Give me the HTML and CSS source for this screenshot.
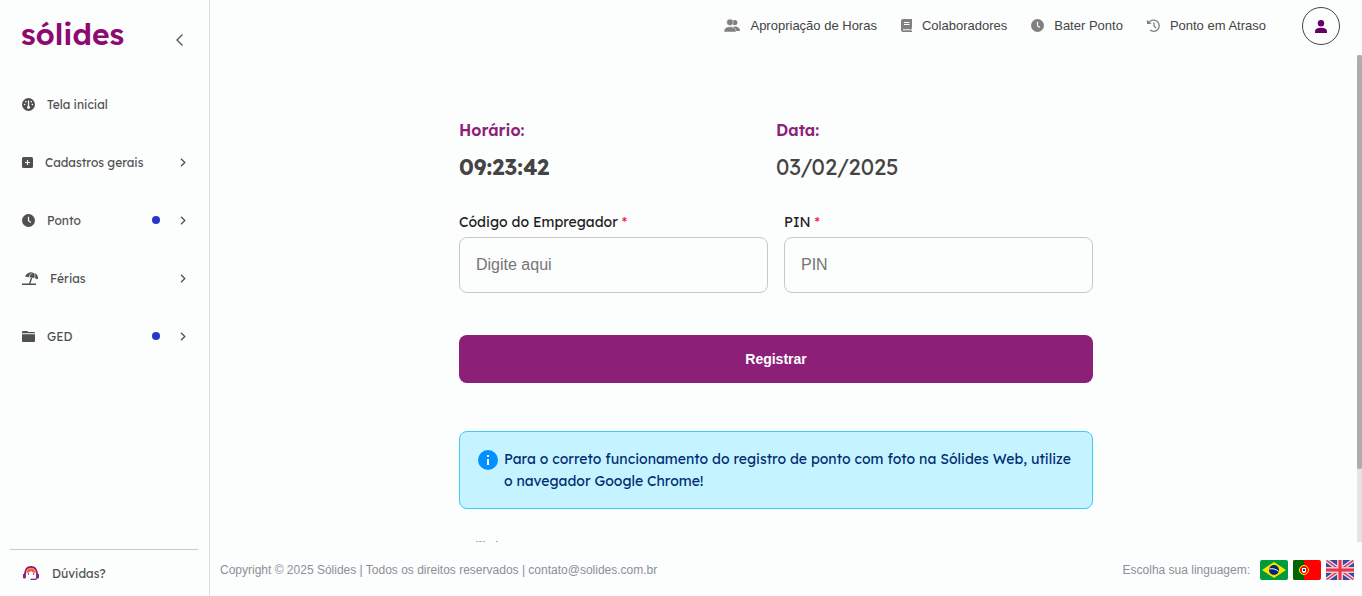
FILE: index.html
```html
<!DOCTYPE html>
<html lang="pt-BR">
<head>
    <meta charset="UTF-8">
    <meta name="viewport" content="width=device-width, initial-scale=1.0">
    <title>Registrar Ponto</title>
    <link rel="stylesheet" href="styles.css">
</head>
<body>
    <aside class="sidebar">
        <div class="brand">
            <a href="#" class="logo">sólides</a>
            <button type="button" class="collapse" aria-label="Recolher menu">
                <svg width="9" height="14" viewBox="0 0 9 14"><path d="M7.500 1.500 2 7l5.500 5.500" /></svg>
            </button>
        </div>

        <nav class="menu">
            <a href="#" class="menu-item">
                <svg class="icon" width="13" height="13" viewBox="0 0 13 13">
                    <circle cx="6.500" cy="6.500" r="6.500" />
                    <path class="cut-line" d="M6.500 2.500v6" />
                    <circle class="cut" cx="6.500" cy="9.200" r="1.500" />
                    <circle class="cut" cx="3.800" cy="3.700" r=".8" />
                    <circle class="cut" cx="9.200" cy="3.700" r=".8" />
                    <circle class="cut" cx="2.600" cy="6.500" r=".8" />
                    <circle class="cut" cx="10.400" cy="6.500" r=".8" />
                </svg>
                <span class="menu-text">Tela inicial</span>
            </a>
            <a href="#" class="menu-item">
                <svg class="icon" width="11" height="11" viewBox="0 0 11 11">
                    <rect width="11" height="11" rx="1.500" />
                    <path class="cut-line" d="M5.500 3v5M3 5.500h5" />
                </svg>
                <span class="menu-text">Cadastros gerais</span>
                <svg class="chevron" width="6" height="9" viewBox="0 0 6 9"><path d="M1 .8 4.800 4.500 1 8.200" /></svg>
            </a>
            <a href="#" class="menu-item">
                <svg class="icon" width="13" height="13" viewBox="0 0 13 13">
                    <circle cx="6.500" cy="6.500" r="6.500" />
                    <path class="cut-line" d="M6.500 2.800v3.900l2.400 1.700" />
                </svg>
                <span class="menu-text">Ponto</span>
                <span class="dot"></span>
                <svg class="chevron" width="6" height="9" viewBox="0 0 6 9"><path d="M1 .8 4.800 4.500 1 8.200" /></svg>
            </a>
            <a href="#" class="menu-item">
                <svg class="icon" width="16" height="13" viewBox="0 0 16 13">
                    <path d="M3 4.600C4.300 1.300 7.600-.3 11 .3L8 2.200 6.600 5.300zM7.400 5.200C8 2.700 9.800.8 11.600.7c1.200.9 1.300 3 .7 5.200zM13 6.200c.5-1.900.4-3.800-.4-5.200 2.500 1 3.900 3.500 3.300 6.300z" />
                    <path d="M9 5.600 10.300 6 8.400 11.500H14V13H0v-1.500h7z" />
                </svg>
                <span class="menu-text">Férias</span>
                <svg class="chevron" width="6" height="9" viewBox="0 0 6 9"><path d="M1 .8 4.800 4.500 1 8.200" /></svg>
            </a>
            <a href="#" class="menu-item">
                <svg class="icon" width="13" height="11" viewBox="0 0 13 11">
                    <path d="M0 2.300V1a1 1 0 0 1 1-1h4l1.500 1H12a1 1 0 0 1 1 1v.3zM0 3.300h13V10a1 1 0 0 1-1 1H1a1 1 0 0 1-1-1z" />
                </svg>
                <span class="menu-text">GED</span>
                <span class="dot"></span>
                <svg class="chevron" width="6" height="9" viewBox="0 0 6 9"><path d="M1 .8 4.800 4.500 1 8.200" /></svg>
            </a>
        </nav>

        <a href="#" class="help">
            <svg width="16" height="14" viewBox="0 0 16 14">
                <path d="M2 12C1 5 3.500 1 8 1s7 4 6 11" fill="none" stroke="#8d1f78" stroke-width="1.800" />
                <path d="M3.300 7C3.800 3.700 6 2.200 8 2.200s4.200 1.500 4.700 4.800C10.500 6.800 9 6 8 4.700 7 6 5.500 6.800 3.300 7z" fill="#ff5a1f" />
                <path d="M0 8h2.300v4.500H1a1 1 0 0 1-1-1zM13.700 8H16v3.500a1 1 0 0 1-1 1h-1.300z" fill="#8d1f78" />
                <path d="M5.500 7.300v1.500M10.500 7.300v1.500M14 12.300l-1.500 1H7.500" fill="none" stroke="#8d1f78" stroke-width="1.200" />
            </svg>
            <span>Dúvidas?</span>
        </a>
    </aside>

    <div class="page">
        <header class="topbar">
            <a href="#" class="top-link">
                <svg width="16" height="13" viewBox="0 0 16 13">
                    <circle cx="10.800" cy="3.500" r="2.600" />
                    <path d="M9.500 7.600c3.500-.6 6.500 1.100 6.500 4.400h-5z" />
                    <circle class="edge" cx="6" cy="3.300" r="3.300" />
                    <path class="edge" d="M0 13c0-3.600 2-5.200 6-5.200S12 9.400 12 13z" />
                </svg>
                Apropriação de Horas
            </a>
            <a href="#" class="top-link">
                <svg width="11" height="13" viewBox="0 0 11 13">
                    <path d="M2 0h9v9.500h-.7V12h.7v1H2a2 2 0 0 1-2-2V2a2 2 0 0 1 2-2z" />
                    <path class="page-line" d="M3 3.500h5.500M3 5.500h5.500M2 10.800h7.500" />
                </svg>
                Colaboradores
            </a>
            <a href="#" class="top-link">
                <svg width="13" height="13" viewBox="0 0 13 13">
                    <circle cx="6.500" cy="6.500" r="6.500" />
                    <path class="cut-line" d="M6.500 2.800v3.900l2.400 1.700" />
                </svg>
                Bater Ponto
            </a>
            <a href="#" class="top-link">
                <svg width="13" height="13" viewBox="0 0 13 13">
                    <path class="line" d="M1.800 3.800A5.600 5.600 0 1 1 3 11M7 3.500v3.300L9 9" />
                    <path d="M0 .8 4.500 5H0z" />
                </svg>
                Ponto em Atraso
            </a>
            <button type="button" class="avatar" aria-label="Perfil">
                <svg width="12" height="13" viewBox="0 0 12 13">
                    <circle cx="6" cy="3.200" r="3.200" />
                    <path d="M0 13v-1.500C0 9 2 7.800 6 7.800s6 1.200 6 3.700V13z" />
                </svg>
            </button>
        </header>

        <div class="scroll-area">
            <main class="content">
                <form class="register">
                    <div class="clock">
                        <div class="clock-col">
                            <h2>Horário:</h2>
                            <p class="time">09:23:42</p>
                        </div>
                        <div class="clock-col">
                            <h2>Data:</h2>
                            <p class="date">03/02/2025</p>
                        </div>
                    </div>

                    <div class="fields">
                        <div class="field">
                            <label for="codigo">Código do Empregador <span class="required">*</span></label>
                            <input type="text" id="codigo" placeholder="Digite aqui">
                        </div>
                        <div class="field">
                            <label for="pin">PIN <span class="required">*</span></label>
                            <input type="password" id="pin" placeholder="PIN">
                        </div>
                    </div>

                    <button type="submit" class="submit">Registrar</button>

                    <div class="notice">
                        <svg width="20" height="20" viewBox="0 0 20 20">
                            <circle cx="10" cy="10" r="10" />
                            <path d="M9 5h2v2H9zM9 9h2v6H9z" />
                        </svg>
                        <p>Para o correto funcionamento do registro de ponto com foto na Sólides Web, utilize o navegador Google Chrome!</p>
                    </div>

                    <svg class="marks" width="24" height="1" viewBox="0 0 24 1"><path d="M1 .5h2M4 .5h3M8 .5h2M21 .5h2" /></svg>
                </form>
            </main>
            <div class="scrollbar"><div class="thumb"></div></div>
        </div>

        <footer class="footer">
            <span>Copyright © 2025 Sólides | Todos os direitos reservados | contato@solides.com.br</span>
            <div class="languages">
                <span>Escolha sua linguagem:</span>
                <button type="button" class="flag" aria-label="Português (Brasil)">
                    <svg width="28" height="20" viewBox="0 0 28 20">
                        <rect width="28" height="20" fill="#009b3a" />
                        <path d="M14 2 26 10 14 18 2 10z" fill="#fedf00" />
                        <circle cx="14" cy="10" r="5" fill="#002776" />
                        <path d="M9.300 9c3.300-.8 6.600 0 9.200 2.400" fill="none" stroke="#fff" />
                    </svg>
                </button>
                <button type="button" class="flag" aria-label="Português (Portugal)">
                    <svg width="28" height="20" viewBox="0 0 28 20">
                        <rect width="28" height="20" fill="#f00" />
                        <rect width="11" height="20" fill="#060" />
                        <circle cx="11" cy="10" r="4.500" fill="#f00" stroke="#ff0" />
                        <path d="M8.500 7.500h5v3.500a2.500 2.500 0 0 1-5 0z" fill="#fff" stroke="#f00" />
                        <rect x="10" y="9" width="2" height="2" fill="#039" />
                    </svg>
                </button>
                <button type="button" class="flag" aria-label="English">
                    <svg width="28" height="20" viewBox="0 0 28 20">
                        <rect width="28" height="20" fill="#3a4a9f" />
                        <path d="M0 0 28 20M28 0 0 20" stroke="#e8e8f4" stroke-width="4" />
                        <path d="M0 0 28 20M28 0 0 20" stroke="#e8384f" stroke-width="1.500" />
                        <path d="M14 0v20M0 10h28" stroke="#e8c8d4" stroke-width="6" />
                        <path d="M14 0v20M0 10h28" stroke="#ee3344" stroke-width="3" />
                    </svg>
                </button>
            </div>
        </footer>
    </div>
</body>
</html>
```
FILE: styles.css
```css
* {
    box-sizing: border-box;
}
body {
    display: flex;
    height: 100vh;
    margin: 0;
    background-color: #fcfdfd;
    color: #444;
    font-family: "Liberation Sans", Arial, sans-serif;
    overflow: hidden;
}
a {
    color: inherit;
    text-decoration: none;
}
button {
    padding: 0;
    border: 0;
    background: none;
    cursor: pointer;
}
svg {
    flex: none;
    display: block;
}
h2, p {
    margin: 0;
}

/* Sidebar */
.sidebar {
    display: flex;
    flex-direction: column;
    flex: none;
    width: 210px;
    border-right: 1px solid #dcdfdf;
    font-family: Lexend, Lato, sans-serif;
    font-size: 12px;
    color: #505050;
}
.brand {
    display: flex;
    justify-content: space-between;
    align-items: center;
    height: 75px;
    padding: 0 25px 8px 21px;
}
.logo {
    color: #8f0a70;
    font-size: 30px;
    font-weight: 600;
    line-height: 40px;
}
.collapse {
    padding-top: 12px;
}
.collapse path, .chevron path {
    fill: none;
    stroke: #505050;
    stroke-width: 1.3;
}
.menu {
    flex: 1;
}
.menu-item {
    display: flex;
    align-items: center;
    height: 58px;
    padding: 0 23px 0 22px;
}
.icon {
    margin-right: 12px;
    fill: #505050;
}
.cut {
    fill: #fcfdfd;
}
.cut-line {
    fill: none;
    stroke: #fcfdfd;
    stroke-width: 1.2;
}
.menu-text {
    flex: 1;
}
.dot {
    width: 8px;
    height: 8px;
    margin-right: 20px;
    border-radius: 50%;
    background-color: #2536c8;
}
.help {
    display: flex;
    align-items: center;
    gap: 13px;
    height: 47px;
    margin: 0 11px 0 10px;
    padding-left: 13px;
    border-top: 1px solid #c8caca;
}

/* Page */
.page {
    display: flex;
    flex: 1;
    flex-direction: column;
    min-width: 0;
}
.topbar {
    display: flex;
    justify-content: flex-end;
    align-items: center;
    gap: 24px;
    height: 55px;
    padding: 0 22px 3px 0;
}
.top-link {
    display: flex;
    align-items: center;
    gap: 10px;
    padding-bottom: 2px;
    font-size: 13px;
}
.top-link svg {
    fill: #808080;
}
.edge {
    stroke: #fcfdfd;
    stroke-width: .5;
}
.page-line {
    stroke: #fcfdfd;
    stroke-width: 1;
}
.line {
    fill: none;
    stroke: #808080;
    stroke-width: 1.3;
}
.avatar {
    display: flex;
    align-items: center;
    justify-content: center;
    width: 38px;
    height: 38px;
    margin-left: 12px;
    border: 1px solid #444;
    border-radius: 50%;
}
.avatar svg {
    fill: #660066;
}
.scroll-area {
    display: flex;
    flex: 1;
    min-height: 0;
}
.content {
    flex: 1;
    padding: 64px 15px 0 0;
    overflow: hidden;
    font-family: Lexend, Inter, sans-serif;
}
.scrollbar {
    width: 5px;
    background-color: #e4e4e4;
}
.thumb {
    height: 85%;
    border-radius: 2px;
    background-color: #adadad;
}

/* Form */
.register {
    max-width: 634px;
    margin: 0 auto;
}
.clock {
    display: flex;
    margin-bottom: 29px;
}
.clock-col {
    flex: 1;
}
.clock h2 {
    margin-bottom: 11px;
    color: #8c1f78;
    font-size: 16px;
    font-weight: 600;
    line-height: 22px;
}
.time, .date {
    font-size: 22px;
    line-height: 30px;
}
.time {
    font-weight: 700;
}
.fields {
    display: flex;
    gap: 16px;
    margin-bottom: 42px;
}
.field {
    flex: 1;
}
.field label {
    display: block;
    margin-bottom: 4px;
    color: #1c1c1c;
    font-size: 14px;
    line-height: 22px;
}
.required {
    color: #ff2344;
}
.field input {
    width: 100%;
    height: 56px;
    padding: 0 16px;
    border: 1px solid #c8c8c8;
    border-radius: 8px;
    background-color: transparent;
    font-family: "Liberation Sans", Arial, sans-serif;
    font-size: 16px;
}
.field input::placeholder {
    color: #757575;
}
.submit {
    width: 100%;
    height: 48px;
    margin-bottom: 48px;
    border-radius: 8px;
    background-color: #8c1f78;
    color: #fff;
    font-family: "Liberation Sans", Arial, sans-serif;
    font-size: 14px;
    font-weight: 700;
}
.notice {
    display: flex;
    gap: 6px;
    padding: 16px 18px;
    border: 1px solid #40c8f4;
    border-radius: 8px;
    background-color: #c5f3ff;
    color: #002d72;
    font-size: 14px;
    line-height: 22px;
}
.notice svg {
    margin-top: 2px;
}
.notice circle {
    fill: #0090ff;
}
.notice path {
    fill: #fff;
}
.marks {
    margin: 32px 0 0 16px;
    stroke: #c4a3bf;
}

/* Footer */
.footer {
    display: flex;
    justify-content: space-between;
    align-items: center;
    height: 54px;
    padding: 2px 8px 0 10px;
    color: #8a9099;
    font-size: 12px;
}
.languages {
    display: flex;
    align-items: center;
    gap: 5px;
}
.languages span {
    margin-right: 5px;
}
.flag svg {
    border-radius: 2px;
}
```
